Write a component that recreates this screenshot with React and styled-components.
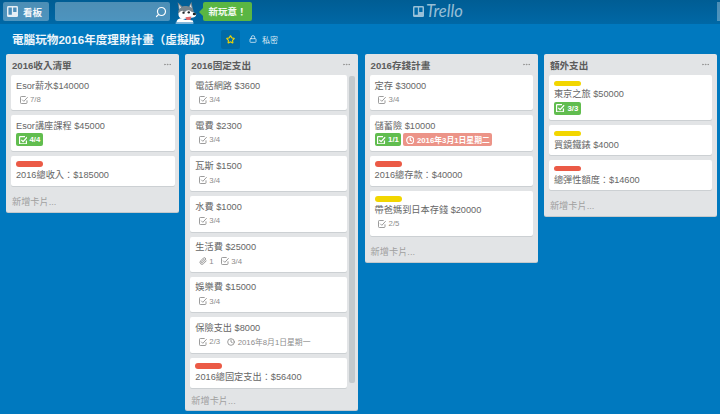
import React from 'react';
import styled, { createGlobalStyle } from 'styled-components';
import { Search, Paperclip, Clock, Lock, Star, Ellipsis } from 'lucide-react';

const GlobalStyle = createGlobalStyle`
  html, body {
    margin: 0;
    height: 100%;
    overflow: hidden;
    background: #0079bf;
    font-family: "Liberation Sans", "Noto Sans CJK TC", sans-serif;
  }
`;

const Page = styled.div`
  width: 720px;
  height: 414px;
  display: flex;
  flex-direction: column;
  overflow: hidden;
`;

const TopBar = styled.header`
  height: 24px;
  flex: none;
  display: flex;
  align-items: flex-start;
  padding: 2px 0 0 3px;
  box-sizing: border-box;
  background: linear-gradient(#005d94, #0068a6);
  position: relative;
`;

const BoardsButton = styled.div`
  width: 46px;
  height: 19px;
  display: flex;
  align-items: center;
  gap: 5px;
  padding-left: 4px;
  box-sizing: border-box;
  border-radius: 2px;
  background: rgba(255, 255, 255, 0.3);
  color: #f2f6f9;
  font-size: 9.5px;
  font-weight: 700;
`;

const SearchBox = styled.div`
  width: 115px;
  height: 19px;
  margin-left: 6px;
  display: flex;
  align-items: center;
  justify-content: flex-end;
  padding-right: 3px;
  box-sizing: border-box;
  border-radius: 2px;
  background: rgba(255, 255, 255, 0.3);
  color: #fff;

  svg {
    transform: scaleX(-1);
  }
`;

const Mascot = styled.svg`
  width: 23px;
  height: 24px;
  margin: -2px 0 0 5px;
  flex: none;
`;

const Bubble = styled.div`
  width: 49px;
  height: 19px;
  margin-left: 5px;
  border-radius: 2px;
  background: #5ab643;
  color: #f3faf0;
  font-size: 9.5px;
  font-weight: 700;
  line-height: 19px;
  text-align: center;
  position: relative;

  &::before {
    content: '';
    position: absolute;
    left: -4px;
    top: 6px;
    border-style: solid;
    border-width: 4px 4px 4px 0;
    border-color: transparent #5ab643 transparent transparent;
  }
`;

const Logo = styled.div`
  position: absolute;
  left: 413px;
  top: 3px;
  display: flex;
  align-items: center;
  gap: 2px;
  color: rgba(255, 255, 255, 0.6);
  font-family: "Lato", sans-serif;
  font-size: 16.5px;
  font-style: italic;
  font-weight: 400;
  line-height: 17px;
`;

const EdgeButton = styled.div`
  position: absolute;
  right: 0;
  top: 2px;
  width: 3px;
  height: 19px;
  background: rgba(255, 255, 255, 0.3);
`;

const TitleRow = styled.div`
  height: 30px;
  flex: none;
  display: flex;
  align-items: center;
  padding-left: 12px;
  box-sizing: border-box;
`;

const BoardTitle = styled.h1`
  margin: 0;
  width: 209px;
  color: #eef5fa;
  font-size: 11.6px;
  font-weight: 700;
  white-space: nowrap;
`;

const StarButton = styled.div`
  width: 19px;
  height: 19px;
  display: flex;
  align-items: center;
  justify-content: center;
  border-radius: 2px;
  background: rgba(0, 0, 0, 0.12);
  color: #f2d600;
`;

const Privacy = styled.div`
  margin-left: 9px;
  display: flex;
  align-items: center;
  gap: 5px;
  color: #dcebf5;
  font-size: 8px;
`;

const Board = styled.main`
  flex: 1;
  min-height: 0;
  display: flex;
  align-items: flex-start;
  gap: 6.3px;
  padding-left: 6px;
`;

const List = styled.section`
  width: 173px;
  flex: none;
  border-radius: 2px;
  background: #e2e4e6;
  box-shadow: 0 1px 0 #c4c9cc;
`;

const ListHead = styled.div`
  height: 21px;
  display: flex;
  align-items: center;
  justify-content: space-between;
  padding: 0 7px 0 6px;
  box-sizing: border-box;
  font-size: 9.6px;
  font-weight: 700;
  color: #5c5c5c;

  svg {
    color: #8c8c8c;
  }
`;

const ListBody = styled.div`
  display: flex;
  gap: 2px;
  padding: 0 ${({ $scroll }) => ($scroll ? '3px' : '4.5px')} 0 5px;
`;

const Cards = styled.div`
  flex: 1;
  min-width: 0;
  display: flex;
  flex-direction: column;
  gap: 5px;
`;

const Thumb = styled.div`
  width: 6px;
  margin: 1px 0 5px;
  border-radius: 2px;
  background: #c4c9cc;
`;

const Label = styled.div`
  width: 27px;
  height: 5.5px;
  margin: 1px 0 2.2px;
  border-radius: 3px;
  background: ${({ $color }) => ($color === 'red' ? '#eb5a46' : '#f2d600')};
`;

const CardTitle = styled.div`
  color: #666;
  font-size: 9.2px;
  line-height: 13px;
  white-space: nowrap;
`;

const Badges = styled.div`
  height: 14px;
  display: flex;
  align-items: center;
  gap: ${({ $tight }) => ($tight ? 0 : 2)}px;
`;

const Card = styled.article`
  padding: 4.5px 5px 3.9px;
  border-radius: 2px;
  background: #fff;
  box-shadow: 0 1px 0 #ccd0d3;

  ${Label} ~ ${CardTitle} {
    margin-bottom: -0.1px;
  }

  ${Label} ~ ${Badges} {
    margin-bottom: 1.4px;
  }
`;

const Badge = styled.span`
  height: 13px;
  display: inline-flex;
  align-items: center;
  gap: 2.5px;
  padding: 0 ${({ $state }) => ($state ? '2.5px' : '3.5px')};
  border-radius: 2px;
  background: ${({ $state }) =>
    $state === 'done' ? '#61bd4f' : $state === 'late' ? '#ec9488' : 'transparent'};
  color: ${({ $state }) => ($state ? '#fff' : '#8c8c8c')};
  font-size: 7.8px;
  font-weight: ${({ $state }) => ($state ? 700 : 400)};
  white-space: nowrap;
`;

const AddCard = styled.div`
  padding: ${({ $scroll }) => ($scroll ? '7px 6px 3px' : '10px 6px 4px')};
  color: #a0a0a0;
  font-size: 9.2px;
  line-height: 12px;
`;

const CheckIcon = ({ size, strokeWidth }) => (
  <svg width={size} height={size} viewBox="0 0 24 24" fill="none" stroke="currentColor" strokeWidth={strokeWidth}>
    <path d="M21 13v7a2.5 2.5 0 0 1-2.5 2.5H4A2.5 2.5 0 0 1 1.5 20V4A2.5 2.5 0 0 1 4 1.500h13" />
    <path d="M6.500 11 11.500 16 23 3.500" />
  </svg>
);

const check = { icon: CheckIcon };
const clock = { icon: Clock };
const clip = { icon: Paperclip };

const lists = [
  {
    title: '2016收入清單',
    cards: [
      { title: 'Esor薪水$140000', badges: [{ ...check, text: '7/8' }] },
      { title: 'Esor講座課程 $45000', badges: [{ ...check, text: '4/4', state: 'done' }] },
      { title: '2016總收入：$185000', label: 'red' },
    ],
  },
  {
    title: '2016固定支出',
    scroll: true,
    cards: [
      { title: '電話網路 $3600', badges: [{ ...check, text: '3/4' }] },
      { title: '電費 $2300', badges: [{ ...check, text: '3/4' }] },
      { title: '瓦斯 $1500', badges: [{ ...check, text: '3/4' }] },
      { title: '水費 $1000', badges: [{ ...check, text: '3/4' }] },
      {
        title: '生活費 $25000',
        badges: [
          { ...clip, text: '1' },
          { ...check, text: '3/4' },
        ],
      },
      { title: '娛樂費 $15000', badges: [{ ...check, text: '3/4' }] },
      {
        title: '保險支出 $8000',
        badges: [
          { ...check, text: '2/3' },
          { ...clock, text: '2016年8月1日星期一' },
        ],
      },
      { title: '2016總固定支出：$56400', label: 'red' },
    ],
  },
  {
    title: '2016存錢計畫',
    cards: [
      { title: '定存 $30000', badges: [{ ...check, text: '3/4' }] },
      {
        title: '儲蓄險 $10000',
        badges: [
          { ...check, text: '1/1', state: 'done' },
          { ...clock, text: '2016年3月1日星期二', state: 'late' },
        ],
      },
      { title: '2016總存款：$40000', label: 'red' },
      { title: '帶爸媽到日本存錢 $20000', label: 'yellow', badges: [{ ...check, text: '2/5' }] },
    ],
  },
  {
    title: '額外支出',
    cards: [
      {
        title: '東京之旅 $50000',
        label: 'yellow',
        badges: [{ ...check, text: '3/3', state: 'done' }],
      },
      { title: '買鏡鐵錶 $4000', label: 'yellow' },
      { title: '總彈性額度：$14600', label: 'red' },
    ],
  },
];

const BoardsMark = ({ size, color, cut }) => (
  <svg width={size} height={size} viewBox="0 0 12 12">
    <rect width="12" height="12" rx="1.5" fill={color} />
    <rect x="1.6" y="1.6" width="3.7" height="8" rx="0.4" fill={cut} />
    <rect x="6.7" y="1.6" width="3.7" height="5" rx="0.4" fill={cut} />
  </svg>
);

const MascotIcon = () => (
  <Mascot viewBox="30 0 70 72">
    <path d="M38 6 53 20 43 36zM80 5 72 20 85 30z" fill="#77868f" />
    <path d="M42 14 49 22 44 29zM78 12 75 21 81 25z" fill="#dfe5e9" />
    <path d="M40 32Q50 16 62 18 74 16 85 28L88 42H40z" fill="#77868f" />
    <path d="M41 40Q50 26 60 36 69 26 80 35L94 40Q97 50 85 53L52 58Q38 52 41 40z" fill="#fff" />
    <circle cx="56" cy="38" r="3.6" fill="#1d2529" />
    <circle cx="72" cy="37" r="3.6" fill="#1d2529" />
    <ellipse cx="89" cy="42" rx="5" ry="3.6" fill="#1d2529" />
    <path d="M62 52 80 50 77 60Q70 65 65 60z" fill="#e2686c" />
    <path d="M34 68Q36 56 48 55L62 60 76 60 84 62 86 68z" fill="#fff" />
    <path d="M32 68H86V72H32z" fill="#9cc6e2" />
  </Mascot>
);

const CardBadge = ({ icon: Icon, text, state }) => (
  <Badge $state={state}>
    <Icon size={state ? 8.5 : 8} strokeWidth={state ? 3.6 : 2.6} />
    {text}
  </Badge>
);

const App = () => (
  <Page>
    <GlobalStyle />
    <TopBar>
      <BoardsButton>
        <BoardsMark size={11} color="#e6eff5" cut="#4c8fbb" />
        看板
      </BoardsButton>
      <SearchBox>
        <Search size={12} strokeWidth={2.4} />
      </SearchBox>
      <MascotIcon />
      <Bubble>新玩意！</Bubble>
      <Logo>
        <BoardsMark size={11} color="rgba(255,255,255,0.6)" cut="#006aa8" />
        Trello
      </Logo>
      <EdgeButton />
    </TopBar>
    <TitleRow>
      <BoardTitle>電腦玩物2016年度理財計畫（虛擬版）</BoardTitle>
      <StarButton>
        <Star size={9} strokeWidth={3} />
      </StarButton>
      <Privacy>
        <Lock size={8} strokeWidth={2.4} />
        私密
      </Privacy>
    </TitleRow>
    <Board>
      {lists.map((list) => (
        <List key={list.title}>
          <ListHead>
            {list.title}
            <Ellipsis size={9} />
          </ListHead>
          <ListBody $scroll={list.scroll}>
            <Cards>
              {list.cards.map((card) => (
                <Card key={card.title}>
                  {card.label && <Label $color={card.label} />}
                  <CardTitle>{card.title}</CardTitle>
                  {card.badges && (
                    <Badges $tight={!card.badges.some((badge) => badge.state)}>
                      {card.badges.map((badge) => (
                        <CardBadge key={badge.text} {...badge} />
                      ))}
                    </Badges>
                  )}
                </Card>
              ))}
            </Cards>
            {list.scroll && <Thumb />}
          </ListBody>
          <AddCard $scroll={list.scroll}>新增卡片...</AddCard>
        </List>
      ))}
    </Board>
  </Page>
);

export default App;
